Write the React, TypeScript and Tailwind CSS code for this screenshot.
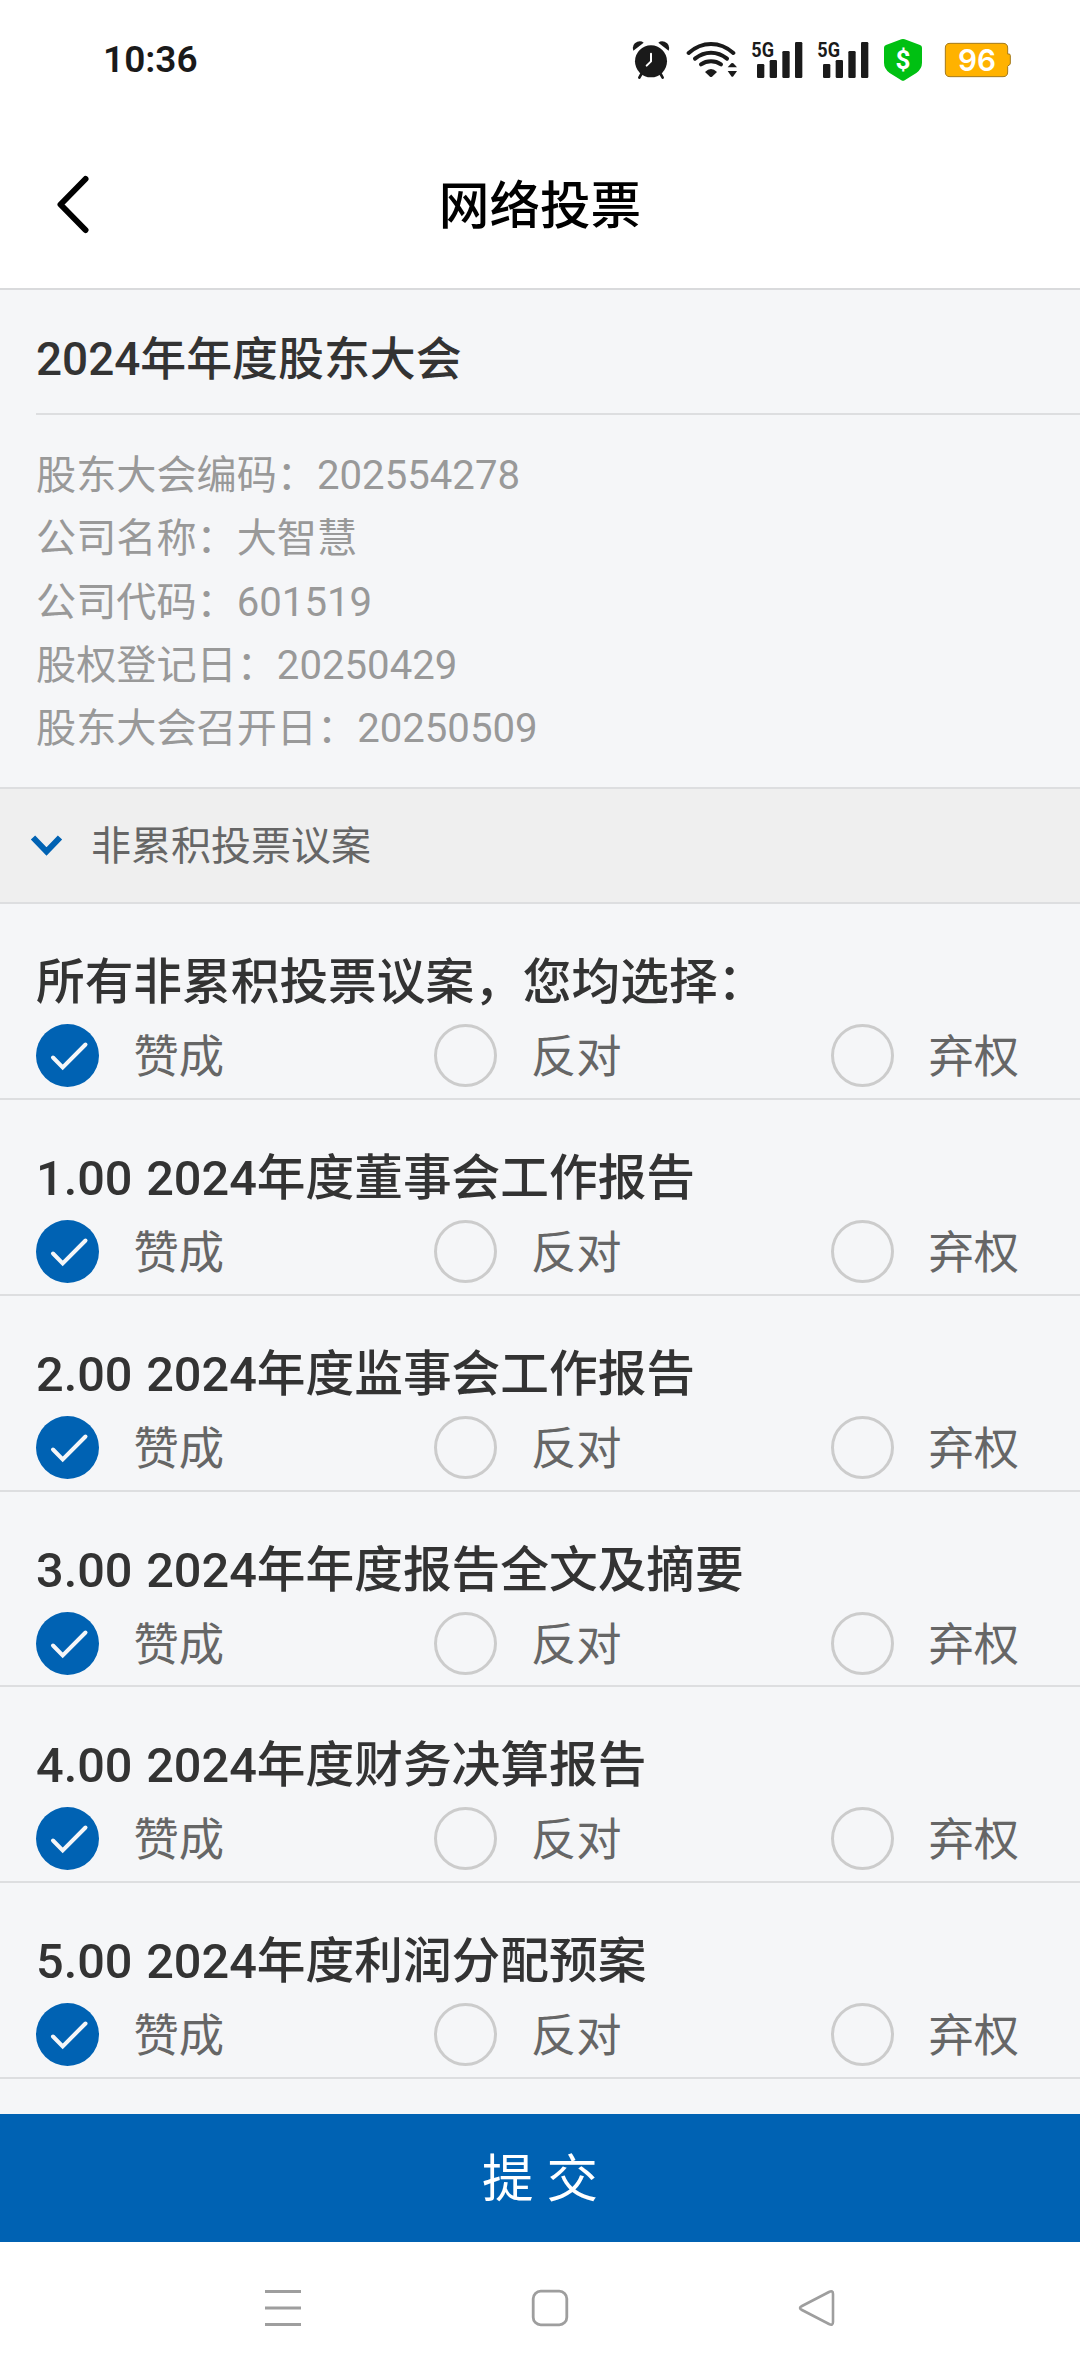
import { useState } from "react";

const AlarmIcon = () => (
  <svg width="40" height="40" viewBox="92 60 120 120" fill="#1a1a1a">
    <circle cx="152" cy="124" r="48" />
    <path d="M99 92 Q93 73 111 65 Q122 61 130 68 Z" />
    <path d="M205 92 Q211 73 193 65 Q182 61 174 68 Z" />
    <path d="M123 162 L117 173 M181 162 L187 173" stroke="#1a1a1a" strokeWidth="8" strokeLinecap="round" />
    <path d="M152 101 V124 L139 137" fill="none" stroke="#fff" strokeWidth="6" strokeLinecap="round" strokeLinejoin="round" />
  </svg>
);

const WifiIcon = () => (
  <svg width="52" height="40" viewBox="258 60 156 120" fill="#1a1a1a">
    <g fill="none" stroke="#1a1a1a" strokeWidth="12" strokeLinecap="round">
      <path d="M266 99 Q296 72 333 72 Q370 72 400 99" />
      <path d="M285 116 Q307 98 333 98 Q359 98 381 116" />
      <path d="M303 133 Q316 124 333 124 Q350 124 363 133" />
    </g>
    <path d="M315 156 Q333 138 351 156 L336 170 Q333 172 330 170 Z" />
    <path d="M383 142 L394 130 Q397 128 400 130 L411 142 Z" />
    <path d="M383 153 L394 169 Q397 172 400 169 L411 153 Z" />
  </svg>
);

const SignalIcon = () => (
  <svg width="52" height="56" viewBox="453 36 156 168" fill="#1a1a1a">
    <text
      x="454" y="110" textLength="68" lengthAdjust="spacingAndGlyphs"
      className="font-['Roboto',sans-serif] text-[63px] font-bold"
    >
      5G
    </text>
    <rect x="471" y="132" width="22" height="42" rx="4" />
    <rect x="509" y="120" width="22" height="54" rx="4" />
    <rect x="547" y="93" width="22" height="81" rx="4" />
    <rect x="585" y="66" width="22" height="108" rx="4" />
  </svg>
);

const ShieldIcon = () => (
  <svg width="40" height="44" viewBox="849 54 120 132">
    <path
      d="M904 58 Q909 56 914 58 L960 75 Q966 77 966 83 V128 Q966 146 949 159 L914 181 Q909 184 904 181 L869 159 Q852 146 852 128 V83 Q852 77 858 75 Z"
      fill="#00c012"
    />
    <text x="909" y="146" textAnchor="middle" fill="#fff" className="font-['Roboto',sans-serif] text-[78px] font-bold">$</text>
  </svg>
);

const BatteryIcon = () => (
  <svg width="68" height="36" viewBox="1032 69 204 108">
    <path
      d="M1050 73 H1209 Q1223 73 1223 87 V105 H1227 Q1231 105 1231 110 V132 Q1231 138 1227 138 L1223 142 V159 Q1223 173 1209 173 H1050 Q1036 173 1036 159 V87 Q1036 73 1050 73 Z"
      fill="#ffb200" stroke="#a37a1c" strokeWidth="3"
    />
    <text
      x="1074" y="157" textLength="114" lengthAdjust="spacingAndGlyphs" fill="#fff"
      className="font-['Inter',sans-serif] text-[91px] font-semibold"
    >
      96
    </text>
  </svg>
);

const StatusBar = () => (
  <div className="flex h-[120px] items-center justify-between pl-[103px] pr-[68px]">
    <span className="text-[37px] font-semibold text-[#1a1a1a]">10:36</span>
    <div className="flex items-center">
      <AlarmIcon />
      <div className="ml-[15px] flex"><WifiIcon /></div>
      <div className="ml-[13px] flex gap-[14px]">
        <SignalIcon />
        <SignalIcon />
      </div>
      <div className="ml-[14px] flex"><ShieldIcon /></div>
      <div className="ml-[21px] flex"><BatteryIcon /></div>
    </div>
  </div>
);

const Header = () => (
  <header className="grid h-[170px] grid-cols-[200px_1fr_200px] items-center border-b-2 border-[#d9dadc]">
    <button className="pl-[55px]">
      <svg width="36" height="60" viewBox="0 0 36 60" fill="none" stroke="#000" strokeWidth="6" strokeLinecap="round" strokeLinejoin="round">
        <path d="M30.5 5 L5.5 30.5 L30.5 56" />
      </svg>
    </button>
    <h1 className="pt-1.5 text-center text-[50.6px] font-medium text-black">网络投票</h1>
  </header>
);

const Radio = ({ checked }: { checked: boolean }) => (
  <svg width="63" height="63" viewBox="0 0 63 63" fill="none">
    {checked ? (
      <>
        <circle cx="31.5" cy="31.5" r="31.5" fill="#0062b3" />
        <path d="M17 33.5 L26.7 43.3 L49.5 20.5" stroke="#f5f6f8" strokeWidth="4" strokeLinecap="round" />
      </>
    ) : (
      <circle cx="31.5" cy="31.5" r="30" stroke="#cccccc" strokeWidth="3" />
    )}
  </svg>
);

const options = ["赞成", "反对", "弃权"];

const VoteItem = ({ title, value, onChange }: { title: string; value: number; onChange: (index: number) => void }) => (
  <li className="h-[195.85px] border-b-2 border-[#dddee0] pl-9 pt-11">
    <h3 className="h-[76px] whitespace-nowrap text-[48.7px] font-medium leading-[70px] text-[#333] [word-spacing:1.5px]">{title}</h3>
    <div className="grid grid-cols-[397.5px_397.5px_1fr]">
      {options.map((option, index) => (
        <button key={option} onClick={() => onChange(index)} className="flex items-center gap-[34.5px]">
          <Radio checked={value === index} />
          <span className="pt-1 text-[45.3px] leading-[59px] text-[#666]">{option}</span>
        </button>
      ))}
    </div>
  </li>
);

const details = [
  "股东大会编码：202554278",
  "公司名称：大智慧",
  "公司代码：601519",
  "股权登记日：20250429",
  "股东大会召开日：20250509",
];

const proposals = [
  "所有非累积投票议案，您均选择：",
  "1.00 2024年度董事会工作报告",
  "2.00 2024年度监事会工作报告",
  "3.00 2024年年度报告全文及摘要",
  "4.00 2024年度财务决算报告",
  "5.00 2024年度利润分配预案",
];

const NavBar = () => (
  <nav className="flex h-[132px] items-center justify-center gap-[229px] pl-[19px]">
    <svg width="38" height="38" viewBox="0 0 38 38" stroke="#9e9e9e" strokeWidth="3">
      <path d="M1 2.5 H37 M1 19 H37 M1 35.5 H37" />
    </svg>
    <svg width="38" height="38" viewBox="0 0 38 38" fill="none" stroke="#9e9e9e" strokeWidth="2.8">
      <rect x="2.2" y="2.2" width="33.6" height="33.6" rx="7.5" />
    </svg>
    <svg width="38" height="38" viewBox="0 0 38 38" fill="none" stroke="#9e9e9e" strokeWidth="2.6">
      <path d="M31 3 Q35 1 35 5 V33 Q35 37 31 35 L4 21 Q0 19 4 17 Z" />
    </svg>
  </nav>
);

const App = () => {
  const [votes, setVotes] = useState(proposals.map(() => 0));

  // the first row applies its choice to every proposal
  const handleVote = (row: number, choice: number) => {
    setVotes(votes.map((vote, index) => (row === 0 || index === row ? choice : vote)));
  };

  return (
    <div className="flex h-[2374px] w-[1080px] flex-col overflow-hidden bg-white font-['Roboto','Noto_Sans_CJK_SC',sans-serif]">
      <StatusBar />
      <Header />
      <main className="h-[1824px] overflow-hidden bg-[#f5f6f8]">
        <section className="h-[497px] pl-9">
          <h2 className="h-[125px] border-b-2 border-[#dddee0] pt-[34px] text-[45.9px] font-medium leading-[70px] text-[#333]">
            2024年年度股东大会
          </h2>
          <div className="pt-[29px]">
            {details.map((detail) => (
              <p key={detail} className="text-[40.15px] leading-[63.3px] text-[#999]">{detail}</p>
            ))}
          </div>
        </section>
        <div className="flex h-[117px] items-center border-y-2 border-[#dddee0] bg-[#efefef] pl-[30px]">
          <svg width="33" height="24" viewBox="0 0 33 24" fill="none" stroke="#0062b3" strokeWidth="6">
            <path d="M3 3.5 L16.5 17.5 L30 3.5" />
          </svg>
          <span className="ml-[28px] pt-[3px] text-[40px] text-[#666]">非累积投票议案</span>
        </div>
        <ul>
          {proposals.map((title, index) => (
            <VoteItem key={title} title={title} value={votes[index]} onChange={(choice) => handleVote(index, choice)} />
          ))}
        </ul>
      </main>
      <button className="h-32 shrink-0 bg-[#0062b3] pt-1 text-[51.5px] text-white">提 交</button>
      <NavBar />
    </div>
  );
};

export default App;
